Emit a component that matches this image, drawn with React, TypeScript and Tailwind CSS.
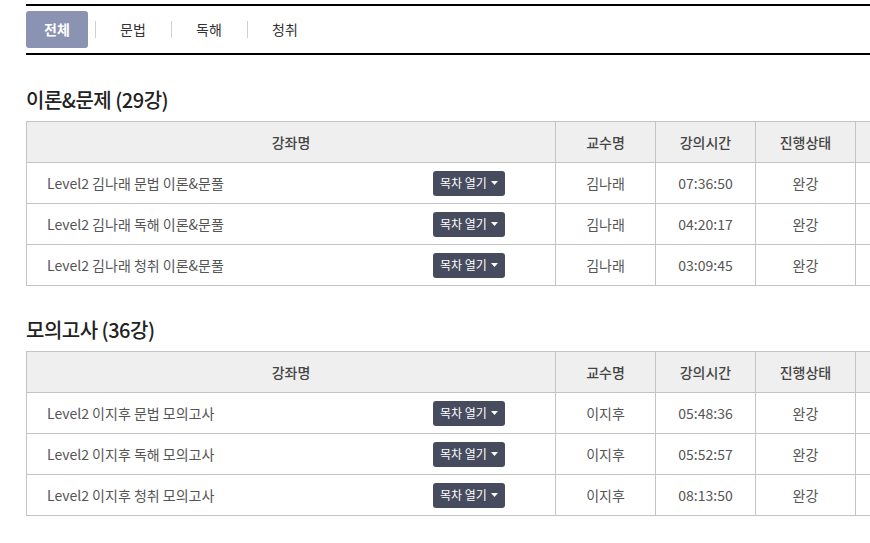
import React from "react";

type Lecture = { title: string; prof: string; time: string; status: string };

const sections: { heading: string; rows: Lecture[] }[] = [
  {
    heading: "이론&문제 (29강)",
    rows: [
      { title: "Level2 김나래 문법 이론&문풀", prof: "김나래", time: "07:36:50", status: "완강" },
      { title: "Level2 김나래 독해 이론&문풀", prof: "김나래", time: "04:20:17", status: "완강" },
      { title: "Level2 김나래 청취 이론&문풀", prof: "김나래", time: "03:09:45", status: "완강" },
    ],
  },
  {
    heading: "모의고사 (36강)",
    rows: [
      { title: "Level2 이지후 문법 모의고사", prof: "이지후", time: "05:48:36", status: "완강" },
      { title: "Level2 이지후 독해 모의고사", prof: "이지후", time: "05:52:57", status: "완강" },
      { title: "Level2 이지후 청취 모의고사", prof: "이지후", time: "08:13:50", status: "완강" },
    ],
  },
];

const tabs = ["전체", "문법", "독해", "청취"];

const LectureTable = ({ rows }: { rows: Lecture[] }) => {
  return (
    <table className="table-fixed border-collapse w-[929px] text-[14px] text-[#555]">
      <colgroup>
        <col className="w-[529px]" />
        <col className="w-[100px]" />
        <col className="w-[100px]" />
        <col className="w-[100px]" />
        <col className="w-[100px]" />
      </colgroup>
      <thead>
        <tr className="h-[41px] bg-[#efefef] text-[#444]">
          <th className="border border-[#c4c4c4] font-medium">강좌명</th>
          <th className="border border-[#c4c4c4] font-medium">교수명</th>
          <th className="border border-[#c4c4c4] font-medium">강의시간</th>
          <th className="border border-[#c4c4c4] font-medium">진행상태</th>
          <th className="border border-[#c4c4c4] font-medium"></th>
        </tr>
      </thead>
      <tbody>
        {rows.map((r) => (
          <tr key={r.title} className="h-[41px]">
            <td className="border border-[#c4c4c4] pl-[20px] pr-[50px]">
              <div className="flex items-center justify-between">
                <span>{r.title}</span>
                <button className="flex items-center gap-[4px] h-[25px] w-[72px] justify-center rounded-[3px] bg-[#464b5d] text-white text-[12px]">
                  목차 열기
                  <svg width="7" height="4" viewBox="0 0 7 4">
                    <path d="M0 0h7L3.5 4z" fill="#fff" />
                  </svg>
                </button>
              </div>
            </td>
            <td className="border border-[#c4c4c4] text-center">{r.prof}</td>
            <td className="border border-[#c4c4c4] text-center">{r.time}</td>
            <td className="border border-[#c4c4c4] text-center">{r.status}</td>
            <td className="border border-[#c4c4c4]"></td>
          </tr>
        ))}
      </tbody>
    </table>
  );
};

export default function App() {
  return (
    <div
      className="w-screen h-screen overflow-hidden bg-white"
      style={{ fontFamily: '"Noto Sans CJK KR", "Noto Sans", sans-serif' }}
    >
      <div className="pl-[26px] pt-[4px] w-[955px]">
        {/* Tabs */}
        <div className="border-t-2 border-b-2 border-black h-[51px] flex items-center">
          {tabs.map((t, i) => (
            <React.Fragment key={t}>
              {i > 0 && <span className="w-px h-[17px] bg-[#d0d0d0] ml-[7px] mr-[6px]" />}
              <div
                className={
                  i === 0
                    ? "w-[62px] h-[37px] flex items-center justify-center rounded-[3px] bg-[#8a93b2] text-white font-bold text-[14px]"
                    : "w-[62px] h-[37px] flex items-center justify-center text-[#333] text-[14px]"
                }
              >
                {t}
              </div>
            </React.Fragment>
          ))}
        </div>

        {sections.map((s, i) => (
          <div key={s.heading} className={i === 0 ? "mt-[30px]" : "mt-[29px]"}>
            <h2 className="text-[20px] leading-[30px] font-medium text-[#222] mb-[6px] tracking-[-0.5px]">
              {s.heading}
            </h2>
            <LectureTable rows={s.rows} />
          </div>
        ))}
      </div>
    </div>
  );
}
